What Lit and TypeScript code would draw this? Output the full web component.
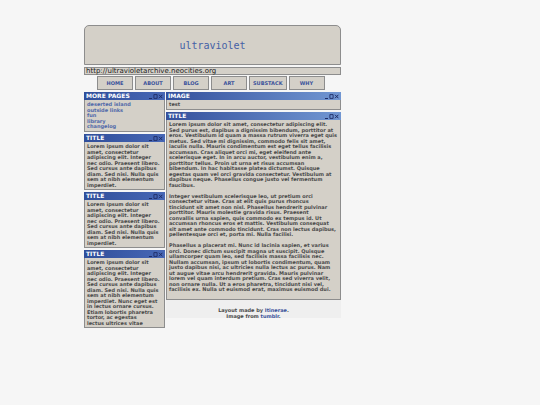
import { LitElement, html, css, svg } from "lit";
import { customElement, property } from "lit/decorators.js";

const toLines = (text: string) =>
  text.split("\n").map((line) => html`<span>${line} </span>`);

const sideText = `Lorem ipsum dolor sit
amet, consectetur
adipiscing elit. Integer
nec odio. Praesent libero.
Sed cursus ante dapibus
diam. Sed nisi. Nulla quis
sem at nibh elementum
imperdiet.`;

const longSideText = `Lorem ipsum dolor sit
amet, consectetur
adipiscing elit. Integer
nec odio. Praesent libero.
Sed cursus ante dapibus
diam. Sed nisi. Nulla quis
sem at nibh elementum
imperdiet. Nunc eget est
in lectus ornare cursus.
Etiam lobortis pharetra
tortor, ac egestas
lectus ultrices vitae`;

const mainText = `Lorem ipsum dolor sit amet, consectetur adipiscing elit.
Sed purus est, dapibus a dignissim bibendum, porttitor at
eros. Vestibulum id quam a massa rutrum viverra eget quis
metus. Sed vitae mi dignissim, commodo felis sit amet,
iaculis nulla. Mauris condimentum est eget tellus facilisis
accumsan. Cras aliquet orci mi, eget eleifend ante
scelerisque eget. In in arcu auctor, vestibulum enim a,
porttitor tellus. Proin ut urna et risus accumsan
bibendum. In hac habitasse platea dictumst. Quisque
egestas quam vel orci gravida consectetur. Vestibulum at
dapibus neque. Phasellus congue justo vel fermentum
faucibus.

Integer vestibulum scelerisque leo, ut pretium orci
consectetur vitae. Cras at elit quis purus rhoncus
tincidunt sit amet non nisl. Phasellus hendrerit pulvinar
porttitor. Mauris molestie gravida risus. Praesent
convallis urna sapien, quis commodo ex tempus id. Ut
accumsan rhoncus eros et mattis. Vestibulum consequat
sit amet ante commodo tincidunt. Cras non lectus dapibus,
pellentesque orci et, porta mi. Nulla facilisi.

Phasellus a placerat mi. Nunc id lacinia sapien, et varius
orci. Donec dictum suscipit magna ut suscipit. Quisque
ullamcorper quam leo, sed facilisis massa facilisis nec.
Nullam accumsan, ipsum ut lobortis condimentum, quam
justo dapibus nisi, ac ultricies nulla lectus ac purus. Nam
ut augue vitae arcu hendrerit gravida. Mauris pulvinar
lorem vel quam interdum pretium. Cras sed viverra velit,
non ornare nulla. Ut a eros pharetra, tincidunt nisi vel,
facilisis ex. Nulla ut euismod erat, maximus euismod dui.`;

@customElement("window-panel")
export class WindowPanel extends LitElement {
  @property() heading = "";

  static styles = css`
    :host {
      display: block;
      box-sizing: border-box;
      border: 1px solid #8d8d8d;
      border-top: 0;
      background: #d4d0c8;
    }
    .bar {
      display: flex;
      align-items: center;
      justify-content: space-between;
      height: 8px;
      margin: 0 -1px;
      padding: 0 2px;
      background: linear-gradient(
        to right,
        var(--bar-from, #2f4e9a),
        var(--bar-to, #4868b6)
      );
    }
    .heading {
      margin: 0;
      color: #fff;
      font-size: 6px;
      line-height: 8px;
      font-weight: bold;
    }
    .controls {
      display: flex;
    }
    .control {
      display: block;
      width: 5px;
      height: 5px;
      margin: 0;
      padding: 0;
      border: 0;
      background: none;
      color: #1f2c66;
    }
    .icon {
      display: block;
      width: 5px;
      height: 5px;
      fill: none;
      stroke: currentColor;
    }
    .body {
      padding: 2px 2px 1px;
    }
  `;

  private control(label: string, shape: unknown) {
    return html`<button class="control" type="button" aria-label=${label}>
      <svg class="icon" viewBox="0 0 5 5">${shape}</svg>
    </button>`;
  }

  render() {
    return html`
      <div class="bar">
        <h2 class="heading">${this.heading}</h2>
        <div class="controls">
          ${this.control("Minimize", svg`<path d="M1 4.5H4" />`)}
          ${this.control("Maximize", svg`<path d="M0.9 0.6H4.1V4.4H0.9Z" stroke-width="0.9" />`)}
          ${this.control("Close", svg`<path d="M1 0.8L4.4 4.2M4.4 0.8L1 4.2" stroke-width="1" />`)}
        </div>
      </div>
      <div class="body"><slot></slot></div>
    `;
  }
}

@customElement("app-root")
export class AppRoot extends LitElement {
  static styles = css`
    :host {
      display: block;
      box-sizing: border-box;
      min-height: 100vh;
      padding: 25px 199px 20px 84px;
      background: #f6f6f6;
      color: #4a4a4a;
      font-family: "DejaVu Sans", sans-serif;
      font-size: 5px;
      font-weight: bold;
    }
    a {
      color: #3a529b;
      text-decoration: none;
    }
    .banner {
      display: grid;
      place-items: center;
      box-sizing: border-box;
      height: 40px;
      border: 1px solid #8d8d8d;
      border-radius: 5px 5px 0 0;
      background: #d4d0c8;
    }
    .site {
      margin: 0;
      padding-top: 2px;
      color: #4560a6;
      font-family: "DejaVu Sans Mono", monospace;
      font-size: 10px;
      line-height: 12px;
      font-weight: normal;
    }
    .address {
      margin-top: 2px;
      padding: 0 1px;
      border: 1px solid #8d8d8d;
      background: #d4d0c8;
      color: #222;
      font-size: 7px;
      font-weight: normal;
      line-height: 6px;
    }
    .nav {
      display: flex;
      gap: 2px;
      margin: 1px 0 2px;
      padding-left: 13px;
    }
    .nav-link {
      box-sizing: border-box;
      min-width: 36px;
      padding: 0 3px;
      border: 1px solid #8d8d8d;
      background: #d4d0c8;
      line-height: 12px;
      text-align: center;
    }
    .columns {
      display: grid;
      grid-template-columns: 81px 1fr;
      align-items: start;
      gap: 1px;
    }
    .column {
      display: grid;
      gap: 2px;
    }
    .main {
      --bar-from: #34509c;
      --bar-to: #7196d2;
    }
    .text {
      display: grid;
      grid-auto-rows: 6px 5px;
      margin: 0;
      padding: 0;
      list-style: none;
      line-height: 5px;
      white-space: nowrap;
    }
    .page-link {
      color: #5068a8;
    }
    .article {
      padding-bottom: 5px;
    }
    .sheet {
      display: grid;
    }
    .footer {
      padding: 8px 0 0;
      height: 10px;
      background: #efefef;
      text-align: center;
    }
  `;

  render() {
    return html`
      <header>
        <div class="banner"><h1 class="site">ultraviolet</h1></div>
        <div class="address">http://ultravioletarchive.neocities.org</div>
        <nav class="nav">
          ${["HOME", "ABOUT", "BLOG", "ART", "SUBSTACK", "WHY"].map(
            (name) => html`<a class="nav-link" href="#">${name}</a>`
          )}
        </nav>
      </header>
      <div class="columns">
        <aside class="column">
          <window-panel heading="MORE PAGES">
            <ul class="text">
              ${["deserted island", "outside links", "fun", "library", "changelog"].map(
                (name) => html`<li><a class="page-link" href="#">${name}</a></li>`
              )}
            </ul>
          </window-panel>
          <window-panel heading="TITLE"><p class="text">${toLines(sideText)}</p></window-panel>
          <window-panel heading="TITLE"><p class="text">${toLines(sideText)}</p></window-panel>
          <window-panel heading="TITLE"><p class="text">${toLines(longSideText)}</p></window-panel>
        </aside>
        <main class="column main">
          <window-panel heading="IMAGE"><p class="text">test</p></window-panel>
          <div class="sheet">
            <window-panel heading="TITLE">
              <p class="text article">${toLines(mainText)}</p>
            </window-panel>
            <footer class="footer">
              <div class="text">
                <span>Layout made by <a href="#">Itinerae</a>.</span>
                <span>Image from <a href="#">tumblr</a>.</span>
              </div>
            </footer>
          </div>
        </main>
      </div>
    `;
  }
}
